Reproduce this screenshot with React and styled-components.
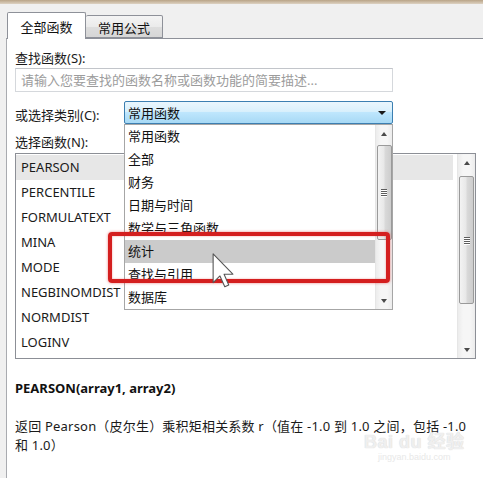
import React from "react";
import styled, { createGlobalStyle } from "styled-components";

const Global = createGlobalStyle`
  html, body { margin: 0; padding: 0; background: #f0f0f0; }
  * { box-sizing: border-box; }
`;

const FONT = `"Noto Sans", "Noto Sans CJK SC", sans-serif`;

const Root = styled.div`
  position: relative;
  width: 483px;
  height: 478px;
  overflow: hidden;
  background: #f0f0f0;
  display: flex;
  flex-direction: column;
  font-family: ${FONT};
  font-size: 13px;
  color: #1a1a1a;
`;

const TopStrip = styled.div`
  height: 4px;
  flex: none;
  background: linear-gradient(#b9a487, #ddd2c2);
`;

const TabBar = styled.div`
  height: 34px;
  flex: none;
  display: flex;
  align-items: flex-end;
  padding-left: 7px;
`;

const Tab = styled.div`
  position: relative;
  z-index: 1;
  width: ${(p) => (p.$active ? 79 : 77)}px;
  height: ${(p) => (p.$active ? 27 : 23)}px;
  margin-bottom: ${(p) => (p.$active ? -1 : 0)}px;
  border: 1px solid #8e9199;
  border-bottom: ${(p) => (p.$active ? "none" : "1px solid #8e9199")};
  border-left: ${(p) => (p.$active ? "1px solid #8e9199" : "none")};
  border-radius: 2px 2px 0 0;
  background: ${(p) =>
    p.$active ? "#ffffff" : "linear-gradient(#f4f4f4, #ebebeb 50%, #dedede 51%, #d6d6d6)"};
  display: flex;
  align-items: center;
  justify-content: center;
  padding-top: ${(p) => (p.$active ? 0 : 1)}px;
  font-size: 13px;
  color: #111;
`;

const Panel = styled.div`
  flex: 1;
  margin-left: 6px;
  background: #ffffff;
  border-top: 1px solid #8e9199;
  border-left: 1px solid #a9abb0;
  padding: 11px 0 0 8px;
  display: flex;
  flex-direction: column;
`;

const Label = styled.div`
  line-height: 16px;
  height: 16px;
  margin-top: ${(p) => p.$mt || 0}px;
  font-size: 13px;
  color: #1a1a1a;
`;

const SearchInput = styled.input`
  width: 378px;
  height: 24px;
  margin-top: 2px;
  border: 1px solid #d5d8dc;
  border-top-color: #c2c5ca;
  padding: 0 5px;
  font-family: ${FONT};
  font-size: 13px;
  outline: none;
  &::placeholder { color: #9c9c9c; }
`;

const SelectRow = styled.div`
  display: flex;
  align-items: center;
  height: 23px;
  margin-top: 9px;
`;

const SelectLabel = styled.div`
  width: 109px;
  padding-top: 4px;
  font-size: 13px;
  color: #1a1a1a;
`;

const SelectBox = styled.div`
  position: relative;
  width: 269px;
  height: 23px;
  border: 1px solid #3c7fb1;
  border-radius: 2px;
  background: linear-gradient(#eaf6fd, #d9f0fc 45%, #bee6fd 50%, #a7d9f5);
  display: flex;
  align-items: center;
  padding-left: 3px;
  font-size: 13px;
  color: #111;
`;

const Caret = styled.span`
  position: absolute;
  right: 6px;
  top: 9px;
  width: 0;
  height: 0;
  border-left: 4px solid transparent;
  border-right: 4px solid transparent;
  border-top: 4px solid #1a1a1a;
`;

const Dropdown = styled.div`
  position: absolute;
  z-index: 2;
  top: 22px;
  left: -1px;
  width: 269px;
  height: 186px;
  background: #ffffff;
  border: 1px solid #a6a6a6;
  display: flex;
`;

const DropItems = styled.div`
  flex: 1;
  display: flex;
  flex-direction: column;
`;

const DropItem = styled.div`
  height: 23px;
  line-height: 23px;
  padding-left: 3px;
  background: ${(p) => (p.$selected ? "#cbcbcb" : "transparent")};
  font-size: 13px;
  color: #111;
  white-space: nowrap;
  overflow: hidden;
`;

const ScrollBar = styled.div`
  width: ${(p) => p.$w || 17}px;
  flex: none;
  display: flex;
  flex-direction: column;
  background: linear-gradient(to right, #ececec, #f6f6f6 30%, #f6f6f6 70%, #ececec);
  border-left: 1px solid #e6e6e6;
`;

const ArrowBtn = styled.div`
  height: 17px;
  flex: none;
  display: flex;
  align-items: center;
  justify-content: center;
  &::after {
    content: "";
    width: 0;
    height: 0;
    border-left: 3.5px solid transparent;
    border-right: 3.5px solid transparent;
    ${(p) => (p.$down ? "border-top: 4px solid #4a4a4a;" : "border-bottom: 4px solid #4a4a4a;")}
  }
`;

const Track = styled.div`
  flex: 1;
  display: flex;
  flex-direction: column;
  align-items: center;
`;

const Thumb = styled.div`
  width: 15px;
  margin-top: ${(p) => p.$offset}px;
  height: ${(p) => p.$size}px;
  border: 1px solid #9a9a9a;
  border-radius: 2px;
  background: linear-gradient(to right, #f3f3f3, #e8e8e8 45%, #d9d9d9 55%, #cdcdcd);
  display: flex;
  flex-direction: column;
  align-items: center;
  justify-content: center;
  gap: 1px;
`;

const Grip = styled.span`
  width: 6px;
  height: 1px;
  background: #5d5d5d;
  box-shadow: 0 1px 0 #ffffff;
`;

const FnList = styled.div`
  width: 461px;
  height: 206px;
  margin-top: 3px;
  border: 1px solid #8c8f96;
  display: flex;
`;

const FnItems = styled.div`
  flex: 1;
  padding: 1px 4px 0 0;
  display: flex;
  flex-direction: column;
`;

const FnItem = styled.div`
  height: 25px;
  line-height: 25px;
  padding-left: 5px;
  background: ${(p) => (p.$selected ? "#e7e7e7" : "transparent")};
  font-size: 13px;
  color: #1a1a1a;
  white-space: nowrap;
`;

const Signature = styled.div`
  margin-top: 21px;
  line-height: 16px;
  font-weight: 700;
  font-size: 13px;
  color: #111;
`;

const Description = styled.div`
  margin-top: 21px;
  width: 460px;
  line-height: 19px;
  font-size: 13px;
  letter-spacing: 0.2px;
  color: #1a1a1a;
`;

const Highlight = styled.div`
  position: absolute;
  z-index: 3;
  left: 108px;
  top: 232px;
  width: 282px;
  height: 51px;
  border: 4px solid #d41f1f;
  border-radius: 4px;
  box-shadow: 0 0 3px rgba(225, 50, 50, 0.6), inset 0 0 2px rgba(225, 50, 50, 0.5);
  pointer-events: none;
`;

const Cursor = styled.svg`
  position: absolute;
  z-index: 4;
  left: 212px;
  top: 253px;
`;

const Watermark = styled.div`
  position: absolute;
  z-index: 1;
  left: 364px;
  top: 432px;
  display: flex;
  flex-direction: column;
  align-items: center;
  white-space: nowrap;
  pointer-events: none;
  color: rgba(255, 255, 255, 0.6);
  text-shadow: 0 0 1px #d9d9d9, 0 0 1px #d9d9d9;
`;

const MarkMain = styled.div`
  font-family: "Liberation Sans", "Noto Sans CJK SC", sans-serif;
  font-size: 18px;
  font-weight: 700;
  line-height: 20px;
  letter-spacing: 0.5px;
`;

const MarkSub = styled.div`
  font-family: "Liberation Sans", sans-serif;
  font-size: 9px;
  line-height: 11px;
  color: #e8e8e8;
  text-shadow: none;
`;

function Scroll({ upOffset, thumbSize, w }) {
  return (
    <ScrollBar $w={w}>
      <ArrowBtn />
      <Track>
        <Thumb $offset={upOffset} $size={thumbSize}>
          <Grip />
          <Grip />
          <Grip />
          <Grip />
        </Thumb>
      </Track>
      <ArrowBtn $down />
    </ScrollBar>
  );
}

const categories = ["常用函数", "全部", "财务", "日期与时间", "数学与三角函数", "统计", "查找与引用", "数据库"];
const functions = ["PEARSON", "PERCENTILE", "FORMULATEXT", "MINA", "MODE", "NEGBINOMDIST", "NORMDIST", "LOGINV"];

export default function App() {
  return (
    <>
      <Global />
      <Root>
        <TopStrip />
        <TabBar>
          <Tab $active>全部函数</Tab>
          <Tab>常用公式</Tab>
        </TabBar>
        <Panel>
          <Label>查找函数(S):</Label>
          <SearchInput placeholder="请输入您要查找的函数名称或函数功能的简要描述..." />
          <SelectRow>
            <SelectLabel>或选择类别(C):</SelectLabel>
            <SelectBox>
              常用函数
              <Caret />
              <Dropdown>
                <DropItems>
                  {categories.map((c) => (
                    <DropItem key={c} $selected={c === "统计"}>
                      {c}
                    </DropItem>
                  ))}
                </DropItems>
                <Scroll upOffset={3} thumbSize={95} />
              </Dropdown>
            </SelectBox>
          </SelectRow>
          <Label $mt={10}>选择函数(N):</Label>
          <FnList>
            <FnItems>
              {functions.map((f) => (
                <FnItem key={f} $selected={f === "PEARSON"}>
                  {f}
                </FnItem>
              ))}
            </FnItems>
            <Scroll upOffset={5} thumbSize={128} w={18} />
          </FnList>
          <Signature>PEARSON(array1, array2)</Signature>
          <Description>
            返回 Pearson（皮尔生）乘积矩相关系数 r（值在 -1.0 到 1.0 之间，包括 -1.0 和 1.0）
          </Description>
        </Panel>
        <Highlight />
        <Cursor width="22" height="35" viewBox="0 0 12 19.5">
          <path
            d="M0.5 0.5 L0.5 16.5 L4.3 12.8 L7 18.8 L9.2 17.8 L6.6 11.8 L11.5 11.8 Z"
            fill="#ffffff"
            stroke="#555555"
            strokeWidth="0.6"
            strokeLinejoin="round"
          />
        </Cursor>
        <Watermark>
          <MarkMain>Bai du 经验</MarkMain>
          <MarkSub>jingyan.baidu.com</MarkSub>
        </Watermark>
      </Root>
    </>
  );
}
